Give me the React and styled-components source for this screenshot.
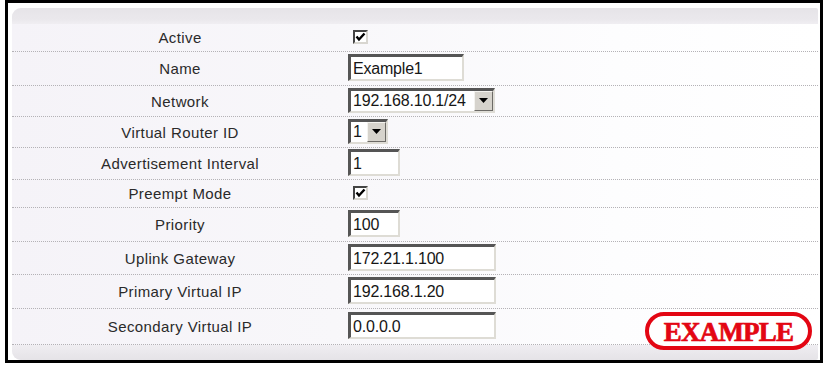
import React from "react";
import styled, { createGlobalStyle } from "styled-components";

const rows = [
	{ label: "Active", kind: "check", h: 28 },
	{ label: "Name", kind: "text", value: "Example1", w: 116, h: 34 },
	{ label: "Network", kind: "select", value: "192.168.10.1/24", w: 147, h: 31 },
	{ label: "Virtual Router ID", kind: "select", value: "1", w: 40, h: 31 },
	{ label: "Advertisement Interval", kind: "text", value: "1", w: 52, h: 32 },
	{ label: "Preempt Mode", kind: "check", h: 28 },
	{ label: "Priority", kind: "text", value: "100", w: 52, h: 34 },
	{ label: "Uplink Gateway", kind: "text", value: "172.21.1.100", w: 148, h: 33 },
	{ label: "Primary Virtual IP", kind: "text", value: "192.168.1.20", w: 148, h: 34 },
	{ label: "Secondary Virtual IP", kind: "text", value: "0.0.0.0", w: 148, h: 36 },
];

const Field = ({ row }) => {
	if (row.kind === "check") {
		return (
			<Check>
				<svg width="11" height="10" viewBox="0 0 11 10">
					<path d="M1.5 4.5 L4 7.5 L9.5 1.5" fill="none" stroke="#000" strokeWidth="2.4" />
				</svg>
			</Check>
		);
	}
	if (row.kind === "select") {
		return (
			<Select $w={row.w}>
				<SelectText>{row.value}</SelectText>
				<Arrow>
					<svg width="9" height="5" viewBox="0 0 9 5">
						<path d="M0 0 H9 L4.5 5 Z" fill="#000" />
					</svg>
				</Arrow>
			</Select>
		);
	}
	return <Input $w={row.w}>{row.value}</Input>;
};

const App = () => {
	return (
		<>
			<GlobalStyle />
			<Frame>
				<Panel>
					<Band $top />
					{rows.map((row) => (
						<Row key={row.label} $h={row.h}>
							<Label>{row.label}</Label>
							<Value>
								<Field row={row} />
							</Value>
						</Row>
					))}
					<Band />
				</Panel>
				<Stamp>EXAMPLE</Stamp>
			</Frame>
		</>
	);
};

export default App;

const GlobalStyle = createGlobalStyle`
	body {
		margin: 0;
		background: #ffffff;
		font-family: "Liberation Sans", Arial, sans-serif;
	}
`;

const Frame = styled.div`
	position: relative;
	box-sizing: border-box;
	width: 818px;
	height: 363px;
	margin-left: 5px;
	border: 3px solid #000;
	background: #fff;
	padding: 5px 2px 0 4px;
`;

const Panel = styled.div`
	display: flex;
	flex-direction: column;
	height: 352px;
	border-radius: 9px 2px 2px 9px;
	overflow: hidden;
	background: linear-gradient(to right, #f5f3f8 0%, #f8f7fa 40%, #fdfdfe 75%, #ffffff 100%);
`;

const Band = styled.div`
	flex: none;
	height: ${({ $top }) => ($top ? "16px" : "15px")};
	background: ${({ $top }) =>
		$top
			? "linear-gradient(to bottom, #e6e4e8, #eae8ec 70%, #f0eef2)"
			: "linear-gradient(to bottom, #f0eef2, #e9e7eb 60%, #e5e3e7)"};
`;

const Row = styled.div`
	flex: none;
	box-sizing: border-box;
	display: flex;
	align-items: center;
	height: ${({ $h }) => $h}px;
	padding-bottom: 2px;
	border-bottom: 1px dotted #b4b2b6;
`;

const Label = styled.div`
	width: 336px;
	text-align: center;
	font-size: 15px;
	letter-spacing: 0.4px;
	color: #2a2a2a;
	padding-top: 2px;
`;

const Value = styled.div`
	flex: 1;
	display: flex;
	align-items: center;
`;

const Check = styled.span`
	box-sizing: border-box;
	display: inline-flex;
	align-items: center;
	justify-content: center;
	width: 15px;
	height: 14px;
	margin-left: 5px;
	background: #fff;
	border: 2px solid;
	border-color: #444444 #d8d6d0 #d8d6d0 #444444;
`;

const Input = styled.div`
	box-sizing: border-box;
	width: ${({ $w }) => $w}px;
	height: 27px;
	padding: 1px 2px 0;
	background: #fff;
	border: 2px solid;
	border-width: 3px 2px 2px 3px;
	border-color: #555555 #dedcd5 #dedcd5 #555555;
	font-size: 16px;
	letter-spacing: -0.2px;
	line-height: 21px;
	color: #161616;
	white-space: nowrap;
	overflow: hidden;
`;

const Select = styled.div`
	box-sizing: border-box;
	display: flex;
	align-items: stretch;
	width: ${({ $w }) => $w}px;
	height: 25px;
	background: #fff;
	border: 2px solid;
	border-width: 3px 2px 2px 3px;
	border-color: #555555 #dedcd5 #dedcd5 #555555;
`;

const SelectText = styled.span`
	flex: 1;
	padding: 0 2px;
	font-size: 16px;
	letter-spacing: -0.2px;
	line-height: 20px;
	color: #161616;
	white-space: nowrap;
	overflow: hidden;
`;

const Arrow = styled.span`
	box-sizing: border-box;
	flex: none;
	width: 19px;
	display: flex;
	align-items: center;
	justify-content: center;
	background: #d6d3cc;
	border: 1px solid;
	border-color: #f4f3ef #6c6a66 #6c6a66 #f4f3ef;
`;

const Stamp = styled.div`
	position: absolute;
	right: 8px;
	bottom: 10px;
	box-sizing: border-box;
	width: 167px;
	height: 38px;
	display: flex;
	align-items: center;
	justify-content: center;
	border: 4px solid #e30613;
	border-radius: 20px;
	background: #fff;
	color: #e30613;
	font-family: "Liberation Serif", "Times New Roman", serif;
	font-weight: bold;
	font-size: 27px;
	letter-spacing: -0.8px;
	-webkit-text-stroke: 0.7px #e30613;
	padding-top: 2px;
`;
